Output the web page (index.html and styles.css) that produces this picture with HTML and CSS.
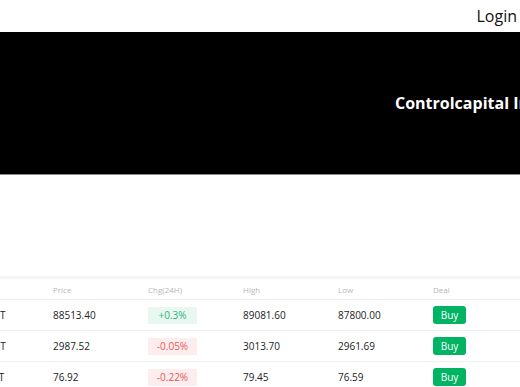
FILE: index.html
```html
<!DOCTYPE html>
<html lang="en">
<head>
    <meta charset="UTF-8">
    <meta name="viewport" content="width=device-width, initial-scale=1.0">
    <title>Controlcapital</title>
    <link rel="stylesheet" href="styles.css">
</head>
<body>

    <div class="top-bar">
        <a class="login-link" href="#">Login</a>
    </div>

    <div class="banner">
        <h1 class="banner-title">Controlcapital Investment Markets</h1>
    </div>

    <div class="market-box">
        <table class="market-table">
            <thead>
                <tr>
                    <th>Pair</th>
                    <th>Price</th>
                    <th>Chg(24H)</th>
                    <th>High</th>
                    <th>Low</th>
                    <th>Deal</th>
                </tr>
            </thead>
            <tbody>
                <tr>
                    <td>BTC/USDT</td>
                    <td>88513.40</td>
                    <td><span class="chg up">+0.3%</span></td>
                    <td>89081.60</td>
                    <td>87800.00</td>
                    <td><button class="buy-button">Buy</button></td>
                </tr>
                <tr>
                    <td>ETH/USDT</td>
                    <td>2987.52</td>
                    <td><span class="chg down">-0.05%</span></td>
                    <td>3013.70</td>
                    <td>2961.69</td>
                    <td><button class="buy-button">Buy</button></td>
                </tr>
                <tr>
                    <td>LTC/USDT</td>
                    <td>76.92</td>
                    <td><span class="chg down">-0.22%</span></td>
                    <td>79.45</td>
                    <td>76.59</td>
                    <td><button class="buy-button">Buy</button></td>
                </tr>
            </tbody>
        </table>
    </div>

</body>
</html>
```

FILE: styles.css
```css
html, body {
    overflow: hidden;
}

body {
    font-family: 'Open Sans', 'Noto Sans', sans-serif;
    background-color: #fff;
    margin: 0;
    padding: 0;
    color: #222;
}

.top-bar {
    height: 32px;
    display: flex;
    justify-content: flex-end;
    align-items: center;
    padding-right: 3px;
}

.login-link {
    font-size: 16px;
    color: #111;
    text-decoration: none;
}

.banner {
    height: 142px;
    background-color: #000;
    border-bottom: 1px solid #8a8a8a;
    display: flex;
    align-items: center;
    padding-left: 395px;
    white-space: nowrap;
    overflow: hidden;
}

.banner-title {
    margin: 0 0 0 0;
    font-size: 16px;
    font-weight: 700;
    color: #fff;
}

.market-box {
    margin-top: 101px;
    border-top: 3px solid #f4f4f4;
    margin-left: -42px;
}

.market-table {
    border-collapse: collapse;
    table-layout: fixed;
    width: 570px;
}

.market-table th,
.market-table td {
    width: 95px;
    text-align: left;
    padding: 0;
    border-bottom: 1px solid #eee;
    white-space: nowrap;
}

.market-table th {
    height: 20px;
    font-size: 8px;
    font-weight: 400;
    color: #b8b8b8;
}

.market-table td {
    height: 30px;
    font-size: 10px;
}

.chg {
    display: inline-block;
    width: 49px;
    height: 17px;
    line-height: 17px;
    text-align: center;
    font-size: 10px;
}

.chg.up {
    background-color: #e9f7f1;
    color: #2fb47e;
}

.chg.down {
    background-color: #fdeded;
    color: #e5595c;
}

.buy-button {
    width: 33px;
    height: 18px;
    padding: 0;
    border: none;
    border-radius: 3px;
    background-color: #00b464;
    color: #fff;
    font-family: inherit;
    font-size: 10px;
    cursor: pointer;
}
```
